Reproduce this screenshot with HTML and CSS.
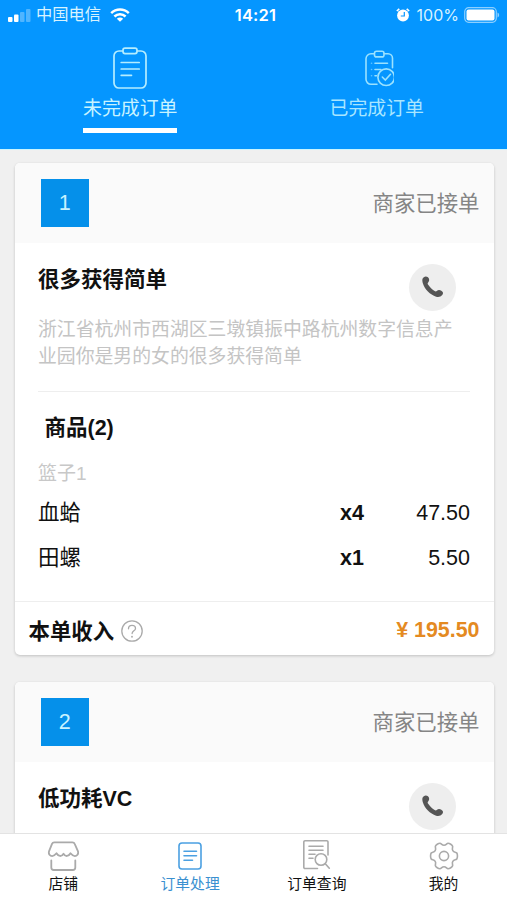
FILE: index.html
```html
<!DOCTYPE html>
<html lang="zh-CN">
<head>
<meta charset="utf-8">
<meta name="viewport" content="width=device-width, initial-scale=1">
<title>订单处理</title>
<link rel="stylesheet" href="styles.css">
</head>
<body>
<svg class="defs" width="0" height="0">
  <symbol id="phone" viewBox="0 0 24 24">
    <path d="M1.600 4C2.400 1.500 5.500.7 7.300 2.400 9 4 9 6.400 7.300 8c-.6.700-.4 1.400.2 2.300 1.800 2.700 4 4.800 6.700 6.500.9.500 1.600.6 2.300-.1 1.300-1.300 3.100-1.200 4.700-.2 2.100 1.300 2.300 2.700 1 4.300-1.500 1.900-3.900 2.500-6.400 1.800C9.500 20.400 3.900 14.900 1.900 8.500 1.400 6.900 1.200 5.300 1.600 4z"/>
  </symbol>
</svg>
<div class="app">
  <header class="top">
    <div class="status">
      <div class="status-left">
        <svg class="signal" viewBox="0 0 23 13" width="23" height="13" fill="#fff">
          <rect x="0" y="8" width="4.500" height="5" rx="1"/><rect x="6" y="5.500" width="4.500" height="7.500" rx="1"/>
          <rect x="12" y="3" width="4.500" height="10" rx="1" opacity=".3"/><rect x="18" y="0" width="4.500" height="13" rx="1" opacity=".3"/>
        </svg>
        <span class="carrier">中国电信</span>
        <svg viewBox="0 0 20 14" width="20" height="14" fill="none" stroke="#fff" stroke-width="2.500">
          <path d="M1.200 5.200c5-4.900 12.600-4.900 17.600 0M4.400 8.500c3.200-3.100 8-3.100 11.200 0"/><path d="M10 13.800 6.800 10.700c1.800-1.700 4.600-1.700 6.400 0z" fill="#fff" stroke="none"/>
        </svg>
      </div>
      <span class="clock">14:21</span>
      <div class="status-right">
        <svg viewBox="0 0 14 14" width="14" height="14">
          <circle cx="7" cy="7.500" r="5.900" fill="#fff"/><path d="M.8 3 3.300.8M13.200 3 10.700.8" stroke="#fff" stroke-width="1.600"/><path d="M8.300 4v4H4.800" fill="none" stroke="#0596ff" stroke-width="1.200"/>
        </svg>
        <span class="percent">100%</span>
        <svg viewBox="0 0 36 16" width="36" height="16">
          <rect x=".7" y=".7" width="31.600" height="14.600" rx="4" fill="none" stroke="#8ccfff" stroke-width="1.200"/><rect x="2.500" y="2.500" width="28" height="11" rx="2" fill="#fff"/><path d="M33.500 5.500c2.200.8 2.200 4.200 0 5z" fill="#8ccfff"/>
        </svg>
      </div>
    </div>
    <nav class="tabs">
      <a class="tab active">
        <svg viewBox="0 0 34 42" width="34" height="42" fill="none" stroke="#b5edff" stroke-width="1.700" stroke-linecap="round">
          <path d="M9.500 4H6a5 5 0 0 0-5 5v27a5 5 0 0 0 5 5h22a5 5 0 0 0 5-5V9a5 5 0 0 0-5-5h-3.500"/><rect x="10" y="1.200" width="14" height="5.400" rx="2"/><path d="M8.200 15.500h18M8.200 22h18M8.200 28.300h10.300"/>
        </svg>
        <span>未完成订单</span>
      </a>
      <a class="tab">
        <svg viewBox="0 0 34 42" width="34" height="42" fill="none" stroke="#9be2ff" stroke-width="1.600" stroke-linecap="round">
          <path d="M14 6.800h-3a5 5 0 0 0-5 5v20.500a5 5 0 0 0 5 5h6M24 6.800h4a4.500 4.500 0 0 1 4.500 4.500v9.500"/><rect x="14.500" y="4.300" width="9.500" height="5.600" rx="2"/><path d="M15 16.300h12.500M15 22.500h6M15 28.700h1.500"/><path d="M11.500 16.300h.1M11.500 22.500h.1M11.500 28.700h.1" opacity=".6"/><circle cx="26.200" cy="30.200" r="8.300"/><path d="m22.300 30 3 3 5.200-5.700"/>
        </svg>
        <span>已完成订单</span>
      </a>
    </nav>
  </header>

  <main class="orders">
    <section class="card">
      <div class="card-head"><span class="number">1</span><span class="state">商家已接单</span></div>
      <div class="card-body">
        <div class="customer">
          <h2>很多获得简单</h2>
          <span class="call"><svg width="23" height="23"><use href="#phone"/></svg></span>
        </div>
        <p class="address">浙江省杭州市西湖区三墩镇振中路杭州数字信息产业园你是男的女的很多获得简单</p>
        <h3>商品(2)</h3>
        <div class="basket">篮子1</div>
        <div class="item"><span>血蛤</span><b>x4</b><span class="price">47.50</span></div>
        <div class="item"><span>田螺</span><b>x1</b><span class="price">5.50</span></div>
      </div>
      <div class="card-foot">
        <span class="income">本单收入</span>
        <svg viewBox="0 0 22 22" width="22" height="22" fill="none" stroke="#aaa" stroke-width="1.300" stroke-linecap="round"><circle cx="11" cy="11" r="10.200"/><path d="M7.500 8.800C7.500 6.600 9 5.300 11 5.300s3.500 1.300 3.500 3.100c0 2.300-3.400 2.600-3.400 5.100"/><path d="M11 16.600v.2" stroke-width="1.800"/></svg>
        <span class="total">¥ 195.50</span>
      </div>
    </section>
    <section class="card">
      <div class="card-head"><span class="number">2</span><span class="state">商家已接单</span></div>
      <div class="card-body">
        <div class="customer">
          <h2>低功耗VC</h2>
          <span class="call"><svg width="23" height="23"><use href="#phone"/></svg></span>
        </div>
      </div>
    </section>
  </main>

  <nav class="bottom">
    <a>
      <svg viewBox="0 0 32 32" width="32" height="32" fill="none" stroke="#aaa" stroke-width="1.800" stroke-linejoin="round" stroke-linecap="round"><path d="M7.200 2.300h18.200c1.200 0 1.900.5 2.300 1.500l3.300 7.600c.7 2.600-1 4.700-3.200 4.700-1.900 0-3-1.200-4.300-2.800-1.800 3.200-5 3.800-7 .4-2 3.400-5.200 2.800-7-.4-1.300 1.600-2.400 2.800-4.300 2.800-2.200 0-3.900-2.100-3.200-4.700L5 3.800c.4-1 1-1.500 2.200-1.500z"/><path d="M4.300 20.500v7c0 1.700.8 2.500 2.500 2.500h19c1.700 0 2.500-.8 2.500-2.500v-7"/></svg>
      <span>店铺</span>
    </a>
    <a class="current">
      <svg viewBox="0 0 32 32" width="32" height="32" fill="none" stroke="#4ba0e2" stroke-width="1.600" stroke-linecap="round"><rect x="5" y="3" width="22" height="26" rx="3"/><path d="M10 11.300h12.500M10 15.800h12.500M10 20.200h8.500"/></svg>
      <span>订单处理</span>
    </a>
    <a>
      <svg viewBox="0 0 32 32" width="32" height="32" fill="none" stroke="#aaa" stroke-width="1.600" stroke-linecap="round"><path d="M16.500 28.500H4a1.200 1.200 0 0 1-1.200-1.200V1.900A1.200 1.200 0 0 1 4 .8h21.800A1.200 1.200 0 0 1 27 2v13"/><path d="M8 6.300h14M8 10.300h14M8 14.300h6M8 18.300h4"/><circle cx="20" cy="19.500" r="5.800"/><path d="m24.300 23.700 4 4.500"/></svg>
      <span>订单查询</span>
    </a>
    <a>
      <svg viewBox="0 0 32 32" width="32" height="32" fill="none" stroke="#aaa" stroke-width="1.600" stroke-linejoin="round"><path d="M12 3.300c1.300 0 1.800 2 4 2s2.700-2 4-2c1.600 0 4.200 1.600 4.600 3 .4 1.300-1 2.300.2 4.300 1.200 2 2.900 1.200 3.900 2.300s1 5.100 0 6.200-2.700.3-3.900 2.300.2 3-.2 4.300c-.4 1.400-3 3-4.600 3-1.300 0-1.800-2-4-2s-2.700 2-4 2c-1.600 0-4.200-1.600-4.600-3-.4-1.300 1-2.300-.2-4.300s-2.900-1.200-3.900-2.300-1-5.100 0-6.200 2.700-.3 3.900-2.300-.2-3 .2-4.300c.4-1.400 3-3 4.600-3z"/><circle cx="16" cy="16" r="4.600"/></svg>
      <span>我的</span>
    </a>
  </nav>
</div>
</body>
</html>
```

FILE: styles.css
```css
* { box-sizing: border-box; }

body {
  margin: 0;
  background: #f0f0f0;
  color: #111;
  font-family: "Liberation Sans", "Noto Sans CJK SC", sans-serif;
}

.defs { display: block; position: absolute; }
svg { display: block; flex: none; }
h2, h3, p { margin: 0; }

.app {
  display: flex;
  flex-direction: column;
  height: 900px;
  overflow: hidden;
}

.top {
  flex: none;
  height: 150px;
  background: #0596ff;
  border-bottom: 1px solid #c9f5ff;
}

.status {
  display: grid;
  grid-template-columns: 1fr auto 1fr;
  align-items: center;
  height: 30px;
  padding: 0 7px 0 8px;
  color: #fff;
  font-size: 16.300px;
}
.status-left, .status-right { display: flex; align-items: center; }
.status-right { justify-content: flex-end; }
.carrier { height: 26px; margin: 0 9px 0 5px; line-height: 24px; color: #d8f3ff; }
.clock { padding-left: 3px; font: 600 16.500px/30px Inter, sans-serif; letter-spacing: .2px; }
.percent { margin: 0 5px 0 7px; font: 16px/30px Inter, sans-serif; color: #d8f3ff; }

.tabs { display: flex; padding: 17px 8px 0; }
.tab {
  flex: 1;
  display: flex;
  flex-direction: column;
  align-items: center;
  color: #a9e6ff;
  font-size: 18.900px;
  line-height: 29px;
}
.tab span { margin-top: 5px; height: 39px; }
.tab:last-child { padding-left: 2px; }
.tab.active { color: #c8f3ff; }
.tab.active span { border-bottom: 5px solid #fff; }

.orders {
  flex: 1;
  min-height: 0;
  overflow: hidden;
  padding: 13px 13.500px 0 14.500px;
}

.card {
  margin-bottom: 27px;
  background: #fff;
  border-radius: 5px;
  box-shadow: 0 1px 3px rgba(0, 0, 0, .2);
  overflow: hidden;
}
.card-head {
  display: flex;
  justify-content: space-between;
  align-items: center;
  height: 80px;
  padding: 0 14px 0 26.500px;
  background: #fafafa;
}
.number {
  width: 47.500px;
  height: 47.500px;
  background: #0590ea;
  color: #c8f3ff;
  font-size: 21.500px;
  line-height: 48px;
  text-align: center;
}
.state { padding-bottom: 4px; color: #858585; font-size: 21.400px; }

.card-body { padding: 21px 23.500px 20px; }
.customer {
  display: flex;
  justify-content: space-between;
  height: 52px;
  padding-right: 14px;
}
h2, h3 { font-size: 21.500px; line-height: 33px; }
.call {
  display: flex;
  align-items: center;
  justify-content: center;
  width: 47px;
  height: 47px;
  padding-bottom: 2px;
  border-radius: 50%;
  background: #eee;
  fill: #555;
}
.address {
  height: 76px;
  border-bottom: 1px solid #eee;
  color: #c4c4c4;
  font-size: 18.850px;
  line-height: 27px;
}
h3 { margin: 20px 0 0 6.500px; }
.basket {
  margin: 15px 0 4px;
  color: #c8c8c8;
  font-size: 19px;
  line-height: 27px;
}
.item {
  display: grid;
  grid-template-columns: 302px 1fr auto;
  font-size: 21.500px;
  line-height: 45px;
}
.card-foot {
  display: flex;
  align-items: center;
  height: 54px;
  padding: 4px 14px 0;
  border-top: 1px solid #eee;
  font-size: 21.400px;
  font-weight: bold;
}
.card-foot svg { margin-left: 7px; }
.income { padding-bottom: 2px; }
.total { margin-left: auto; color: #e48a22; }

.bottom {
  flex: none;
  display: flex;
  height: 67px;
  border-top: 1px solid #e3e3e3;
  background: #fff;
}
.bottom a {
  flex: 1;
  display: flex;
  flex-direction: column;
  align-items: center;
  padding-top: 6px;
  font-size: 14.800px;
  line-height: 25px;
}
.bottom .current { color: #3a90d0; }
```
